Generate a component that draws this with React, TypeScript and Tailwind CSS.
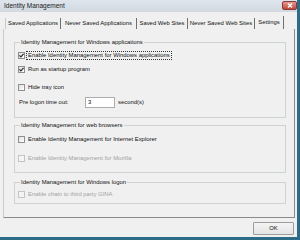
import React from 'react';

function Check({ checked, disabled }: { checked?: boolean; disabled?: boolean }) {
  return (
    <span
      className={`flex h-[7px] w-[7px] shrink-0 items-center justify-center border ${
        disabled ? 'border-[#c4c4c4] bg-[#f4f4f4]' : 'border-[#8e8f8f] bg-linear-to-br from-[#dedede] to-white'
      }`}
    >
      {checked && (
        <svg width="5" height="5" viewBox="0 0 5 5">
          <path d="M0.4 2.4 L1.9 3.9 L4.6 0.8" fill="none" stroke="#2b2b2b" strokeWidth="1.2" />
        </svg>
      )}
    </span>
  );
}

interface RowProps {
  label: string;
  checked?: boolean;
  disabled?: boolean;
  focus?: boolean;
  className?: string;
}

function Row({ label, checked, disabled, focus, className = '' }: RowProps) {
  return (
    <div className={`flex h-[8px] items-center gap-[2px] ${className}`}>
      <Check checked={checked} disabled={disabled} />
      <span
        className={`px-[1px] leading-[7px] ${disabled ? 'text-[#a3a3a3]' : 'text-[#111]'} ${
          focus ? 'outline outline-1 outline-dotted outline-[#333]' : ''
        }`}
      >
        {label}
      </span>
    </div>
  );
}

function Group({ title, className = '', children }: { title: string; className?: string; children: React.ReactNode }) {
  return (
    <fieldset className={`border border-[#cdd2d6] pl-[3px] ${className}`}>
      <legend className="ml-[2px] px-[1px] leading-[7px] text-[#111]">{title}</legend>
      {children}
    </fieldset>
  );
}

const tabs = [
  { label: 'Saved Applications', w: 'w-[56px]' },
  { label: 'Never Saved Applications', w: 'w-[76px]' },
  { label: 'Saved Web Sites', w: 'w-[51px]' },
  { label: 'Never Saved Web Sites', w: 'w-[67px]' },
];

export default function App() {
  return (
    <div className="flex h-[240px] w-[300px] flex-col overflow-hidden border-r-[3px] border-b-[3px] border-[#2c6c86] bg-[#f0f0f0] font-['Liberation_Sans',Arial,sans-serif] text-[5.9px] text-[#111]">
      {/* title bar */}
      <div className="flex h-[12px] shrink-0 items-start bg-linear-to-b from-[#dfe5ec] to-[#d2d9e1]">
        <span className="pl-[4px] pt-[2px] text-[6.5px] leading-[8px] text-[#1a1a1a]">Identity Management</span>
        <div className="ml-auto mt-[1px] flex h-[9px] w-[15px] items-center justify-center rounded-[2px] border border-[#8a3a34] bg-linear-to-b from-[#e59b91] to-[#c2453a]">
          <svg width="6" height="5" viewBox="0 0 6 5">
            <path d="M1 0.5 L5 4.5 M5 0.5 L1 4.5" stroke="white" strokeWidth="1.3" />
          </svg>
        </div>
      </div>

      <div className="flex flex-1 flex-col pl-[3px] pt-[4px] pr-[2px]">
        {/* tabs */}
        <div className="flex h-[13px] shrink-0 items-end pl-[2px]">
          {tabs.map((t, i) => (
            <div
              key={t.label}
              className={`flex h-[11px] items-center justify-center border-r border-[#6f6f6f] ${t.w} ${
                i === 0 ? 'border-l border-l-[#c8c8c8]' : ''
              }`}
            >
              {t.label}
            </div>
          ))}
          <div className="flex h-[13px] w-[29px] items-center justify-center border-r border-[#6f6f6f] pb-[1px]">
            Settings
          </div>
        </div>

        {/* panel */}
        <div className="flex h-[189px] shrink-0 flex-col border-l border-r border-b border-l-[#cccccc] border-r-[#8a8a8a] border-b-[#8a8a8a] pl-[10px] pr-[8px] pt-[10px]">
          <Group title="Identity Management for Windows applications" className="pb-[9px]">
            <Row className="mt-[5px]" label="Enable Identity Management for Windows applications" checked focus />
            <Row className="mt-[6px]" label="Run as startup program" checked />
            <Row className="mt-[10px]" label="Hide tray icon" />
            <div className="mt-[6px] flex h-[11px] items-center">
              <span className="w-[67px] pl-[1px]">Pre logon time out:</span>
              <div className="flex h-[11px] w-[30px] items-center border border-[#abadb3] bg-white pl-[2px]">3</div>
              <span className="pl-[3px]">second(s)</span>
            </div>
          </Group>

          <Group title="Identity Management for web browsers" className="mt-[4px] pb-[10px]">
            <Row className="mt-[6px]" label="Enable Identity Management for Internet Explorer" />
            <Row className="mt-[11px]" label="Enable Identity Management for Mozilla" disabled />
          </Group>

          <Group title="Identity Management for Windows logon" className="mt-[6px] pb-[5px]">
            <Row className="mt-[4px]" label="Enable chain to third party GINA" disabled />
          </Group>
        </div>

        {/* buttons */}
        <div className="flex justify-end pt-[4px] pr-[1px]">
          <button className="flex h-[13px] w-[41px] items-center justify-center rounded-[1px] border border-[#9c9c9c] bg-linear-to-b from-[#f4f4f4] to-[#e4e4e4] text-[#111]">
            OK
          </button>
        </div>
      </div>
    </div>
  );
}
